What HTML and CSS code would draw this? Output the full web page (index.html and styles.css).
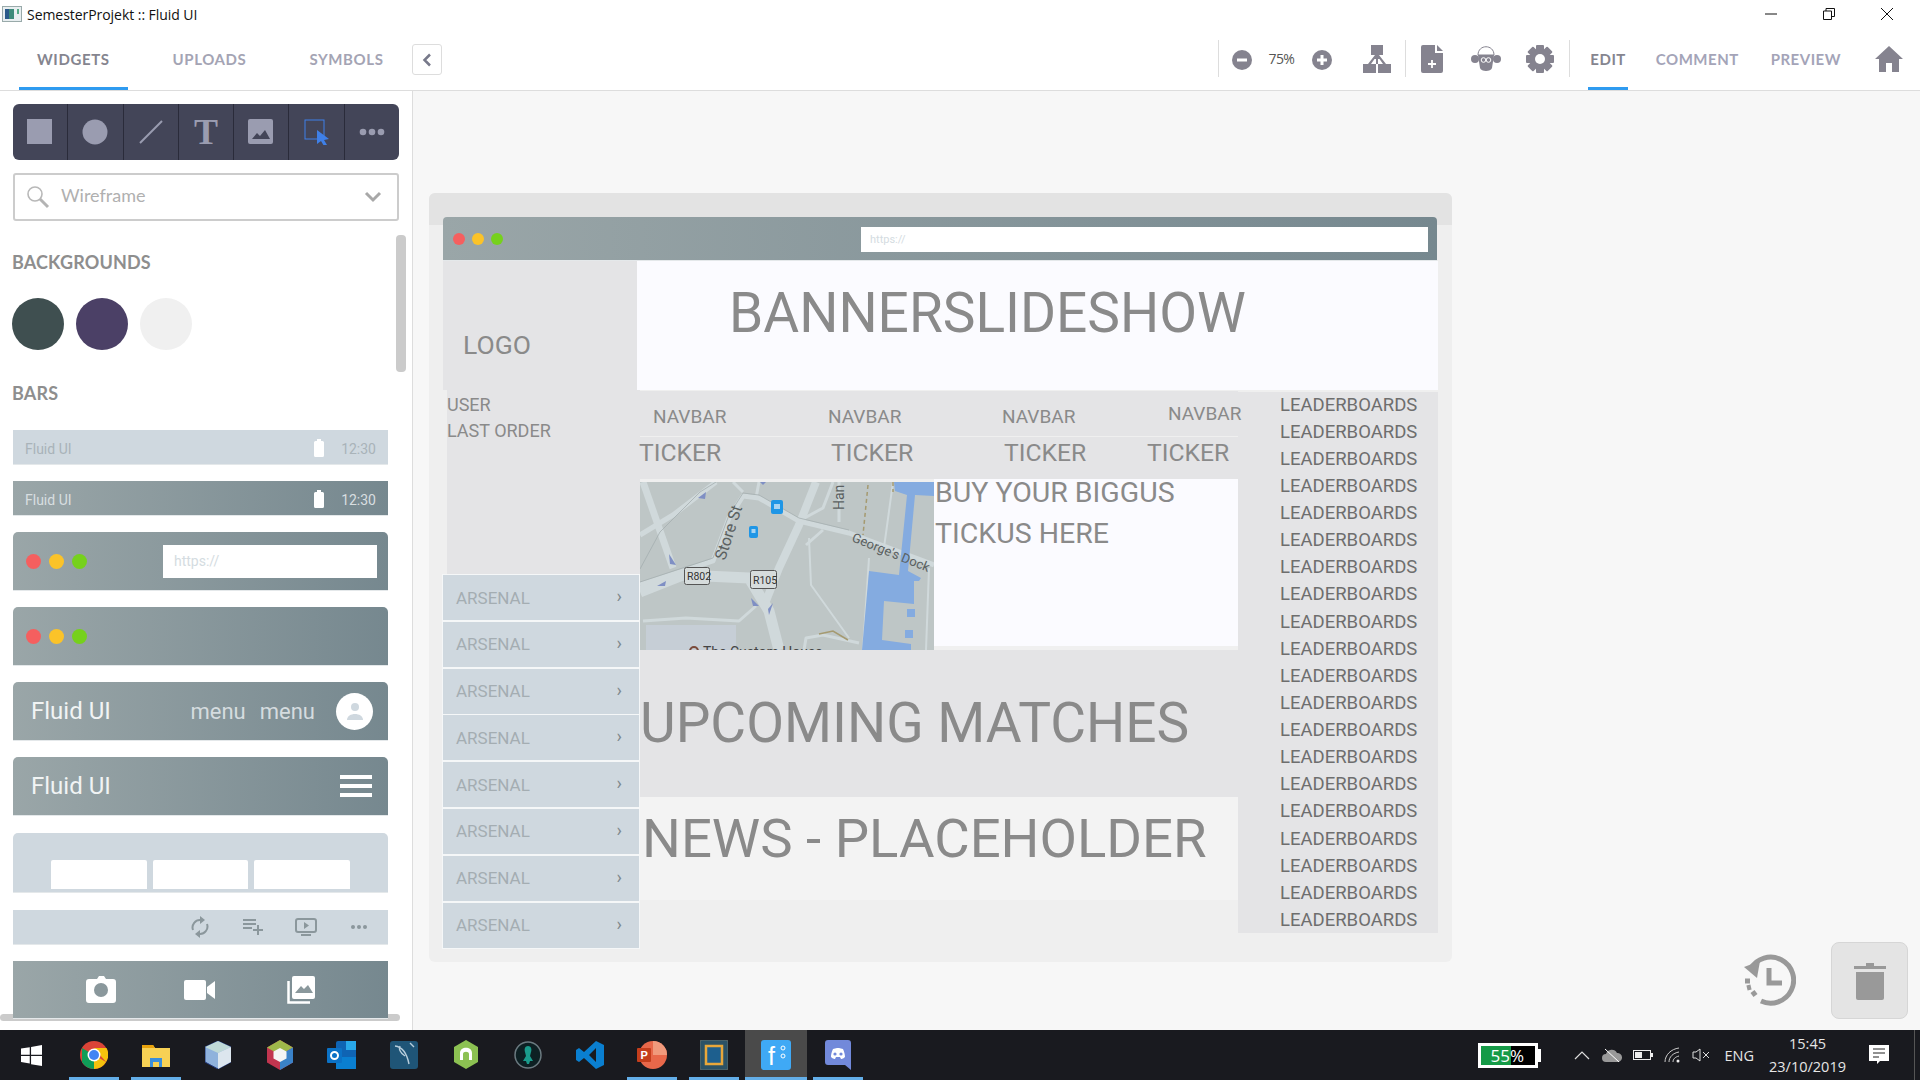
FILE: index.html
```html
<!DOCTYPE html>
<html lang="en">
<head>
    <meta charset="UTF-8">
    <title>SemesterProjekt :: Fluid UI</title>
    <link rel="stylesheet" href="styles.css">
</head>
<body>
    <!-- window title -->
    <div class="titlebar">
        <svg class="app-icon" width="20" height="16" viewBox="0 0 20 16"><rect x="0.5" y="0.5" width="19" height="15" fill="#e8eef0" stroke="#9aa"/><rect x="3" y="3" width="9" height="10" fill="#3d8a7a"/><rect x="3" y="3" width="4" height="10" fill="#2b5a8a"/><rect x="15" y="3" width="2" height="5" fill="#5a8"/></svg>
        <span class="title-text">SemesterProjekt :: Fluid UI</span>
        <div class="win-btns">
            <svg width="12" height="12" viewBox="0 0 12 12"><path d="M0 6h12" stroke="#111"/></svg>
            <svg width="12" height="12" viewBox="0 0 12 12"><path d="M.5 3h8v8.500h-8zM3 3V.5h8.500v8H8.500" fill="none" stroke="#111"/></svg>
            <svg width="12" height="12" viewBox="0 0 12 12"><path d="M0 0l12 12M12 0L0 12" stroke="#111"/></svg>
        </div>
    </div>

    <!-- top toolbar -->
    <div class="topbar">
        <div class="tabs">
            <div class="tab active">WIDGETS</div>
            <div class="tab">UPLOADS</div>
            <div class="tab">SYMBOLS</div>
        </div>
        <div class="collapse-btn">
            <svg width="10" height="14" viewBox="0 0 10 14"><path d="M8 1.500L2.500 7 8 12.500" fill="none" stroke="#77798a" stroke-width="2.500"/></svg>
        </div>
        <div class="top-right">
            <div class="divider"></div>
            <svg class="zoom-minus" width="22" height="22" viewBox="0 0 22 22"><circle cx="11" cy="11" r="10" fill="#85838f"/><path d="M6 11h10" stroke="#fff" stroke-width="3"/></svg>
            <span class="zoom-val">75%</span>
            <svg class="zoom-plus" width="22" height="22" viewBox="0 0 22 22"><circle cx="11" cy="11" r="10" fill="#85838f"/><path d="M6 11h10M11 6v10" stroke="#fff" stroke-width="3"/></svg>
            <svg class="flow-icon" width="28" height="28" viewBox="0 0 28 28"><path fill="#85838f" d="M8 0h12v10h-4l7 9h5v9H15v-9h5l-3.500-5H15v5h-2v-5h-1.500L8 19h5v9H0v-9h5l7-9H8z"/></svg>
            <div class="divider d2"></div>
            <svg class="doc-icon" width="22" height="28" viewBox="0 0 22 28"><path fill="#85838f" d="M2 0h12v8h8v18a2 2 0 0 1-2 2H2a2 2 0 0 1-2-2V2a2 2 0 0 1 2-2z"/><path fill="#85838f" d="M16 0l6 6h-6z"/><path d="M11 15v8M7 19h8" stroke="#fff" stroke-width="1.800"/></svg>
            <svg class="sheep-icon" width="30" height="26" viewBox="0 0 30 26"><circle cx="4" cy="13" r="4" fill="#85838f"/><circle cx="26" cy="13" r="4" fill="#85838f"/><path d="M7 9h16l-2 13c-1 4-11 4-12 0z" fill="#85838f"/><path d="M7 9c0-11 16-11 16 0z" fill="#fff" stroke="#85838f"/><circle cx="12.500" cy="14" r="2.300" fill="none" stroke="#fff"/><circle cx="17.500" cy="14" r="2.300" fill="none" stroke="#fff"/></svg>
            <svg class="gear-icon" width="28" height="28" viewBox="0 0 28 28"><g fill="#85838f"><rect x="10" y="0" width="8" height="28" rx="1"/><rect x="10" y="0" width="8" height="28" rx="1" transform="rotate(45 14 14)"/><rect x="10" y="0" width="8" height="28" rx="1" transform="rotate(90 14 14)"/><rect x="10" y="0" width="8" height="28" rx="1" transform="rotate(135 14 14)"/><circle cx="14" cy="14" r="9.500"/></g><circle cx="14" cy="14" r="5" fill="#fff"/></svg>
            <div class="divider d3"></div>
            <div class="mode active">EDIT</div>
            <div class="mode">COMMENT</div>
            <div class="mode">PREVIEW</div>
            <svg class="home-icon" width="28" height="26" viewBox="0 0 28 26"><path fill="#85838f" d="M14 0L28 13h-4v13h-7v-9h-6v9H4V13H0z"/></svg>
        </div>
    </div>

    <div class="main">
        <!-- widget panel -->
        <div class="sidebar">
            <div class="tools">
                <div class="tool"><svg width="26" height="26" viewBox="0 0 26 26"><rect width="25" height="25" fill="#9a9cb0"/></svg></div>
                <div class="tool"><svg width="26" height="26" viewBox="0 0 26 26"><circle cx="13" cy="13" r="12.500" fill="#9a9cb0"/></svg></div>
                <div class="tool"><svg width="26" height="26" viewBox="0 0 26 26"><path d="M2 24L24 2" stroke="#9a9cb0" stroke-width="2"/></svg></div>
                <div class="tool"><span class="t-glyph">T</span></div>
                <div class="tool"><svg width="26" height="26" viewBox="0 0 26 26"><rect width="25" height="25" rx="2" fill="#9a9cb0"/><path d="M4 20l5-6 3 3 5-6 5 9z" fill="#434558"/></svg></div>
                <div class="tool"><svg width="26" height="26" viewBox="0 0 26 26"><rect x="1" y="1" width="19" height="19" fill="none" stroke="#3f80e8"/><path d="M13 11l12 9-5 1 3 5-3 1-3-5-4 3z" fill="#3f80e8"/></svg></div>
                <div class="tool"><svg width="26" height="8" viewBox="0 0 26 8"><circle cx="4" cy="4" r="3.300" fill="#9a9cb0"/><circle cx="13" cy="4" r="3.300" fill="#9a9cb0"/><circle cx="22" cy="4" r="3.300" fill="#9a9cb0"/></svg></div>
            </div>

            <div class="search">
                <svg width="24" height="24" viewBox="0 0 24 24"><circle cx="9" cy="9" r="7" fill="none" stroke="#b8b8b8" stroke-width="1.600"/><path d="M14 14l8 8" stroke="#b4b4b4" stroke-width="3"/></svg>
                <span class="search-text">Wireframe</span>
                <svg class="search-arrow" width="18" height="12" viewBox="0 0 18 12"><path d="M2 2l7 7 7-7" fill="none" stroke="#a8a8a8" stroke-width="3"/></svg>
            </div>

            <div class="side-head">BACKGROUNDS</div>
            <div class="swatches">
                <div class="swatch dark"></div>
                <div class="swatch purple"></div>
                <div class="swatch pale"></div>
            </div>

            <div class="side-head bars-head">BARS</div>

            <div class="bar status light">
                <span class="status-name">Fluid UI</span>
                <svg width="10" height="18" viewBox="0 0 10 18"><path d="M3 0h4v2h1.500A1.500 1.500 0 0 1 10 3.500V16.500A1.500 1.500 0 0 1 8.500 18h-7A1.500 1.500 0 0 1 0 16.500V3.500A1.500 1.500 0 0 1 1.500 2H3z" fill="#fff"/></svg>
                <span class="status-time">12:30</span>
            </div>
            <div class="bar status grad">
                <span class="status-name">Fluid UI</span>
                <svg width="10" height="18" viewBox="0 0 10 18"><path d="M3 0h4v2h1.500A1.500 1.500 0 0 1 10 3.500V16.500A1.500 1.500 0 0 1 8.500 18h-7A1.500 1.500 0 0 1 0 16.500V3.500A1.500 1.500 0 0 1 1.500 2H3z" fill="#fff"/></svg>
                <span class="status-time">12:30</span>
            </div>
            <div class="bar tall grad round">
                <div class="dots"><i class="red"></i><i class="yellow"></i><i class="green"></i></div>
                <div class="url">https://</div>
            </div>
            <div class="bar tall grad round">
                <div class="dots"><i class="red"></i><i class="yellow"></i><i class="green"></i></div>
            </div>
            <div class="bar tall grad round">
                <span class="brand">Fluid UI</span>
                <span class="bar-menu first">menu</span>
                <span class="bar-menu">menu</span>
                <div class="avatar"><svg width="18" height="18" viewBox="0 0 18 18"><circle cx="9" cy="5" r="4" fill="#cfd8df"/><path d="M1 18c0-8 16-8 16 0z" fill="#cfd8df"/></svg></div>
            </div>
            <div class="bar tall grad round last-tall">
                <span class="brand">Fluid UI</span>
                <div class="burger"><i></i><i></i><i></i></div>
            </div>
            <div class="bar tabs-bar light">
                <div class="mini-tab"></div>
                <div class="mini-tab"></div>
                <div class="mini-tab"></div>
            </div>
            <div class="bar actions light">
                <svg class="act-sync" width="18" height="22" viewBox="0 0 18 22"><path d="M2 14a7.500 7.500 0 0 1 8-10M16 8a7.500 7.500 0 0 1-8 10" fill="none" stroke="#8b979c" stroke-width="2"/><path d="M9 0l5 4-5 4zM9 14l-5 4 5 4z" fill="#8b979c"/></svg>
                <svg class="act-queue" width="20" height="16" viewBox="0 0 20 16"><path d="M0 1h13M0 5h13M0 9h9M15 6v10M10 11h10" stroke="#8b979c" stroke-width="2"/></svg>
                <svg width="22" height="18" viewBox="0 0 22 18"><rect x="1" y="1" width="20" height="13" rx="2" fill="none" stroke="#8b979c" stroke-width="2"/><path d="M9 4l5 3.500-5 3.500zM6 16h10v2H6z" fill="#8b979c"/></svg>
                <svg width="16" height="4" viewBox="0 0 16 4"><circle cx="2" cy="2" r="2" fill="#8b979c"/><circle cx="8" cy="2" r="2" fill="#8b979c"/><circle cx="14" cy="2" r="2" fill="#8b979c"/></svg>
            </div>
            <div class="bar media grad">
                <svg width="30" height="27" viewBox="0 0 30 27"><path d="M8 3h3l2-3h5l2 3h7a3 3 0 0 1 3 3v18a3 3 0 0 1-3 3H3a3 3 0 0 1-3-3V6a3 3 0 0 1 3-3z" fill="#fff"/><circle cx="15" cy="14" r="7" fill="#8a989c"/></svg>
                <svg width="31" height="20" viewBox="0 0 31 20"><rect width="22" height="20" rx="2" fill="#fff"/><path d="M23 7l8-6v18l-8-6z" fill="#fff"/></svg>
                <svg width="28" height="28" viewBox="0 0 28 28"><rect x="5" y="0" width="23" height="23" rx="2" fill="#fff"/><path d="M8 17l6-7 3 3 4-4 5 8z" fill="#8a989c"/><path d="M1.500 5v21.500H23" fill="none" stroke="#fff" stroke-width="2.500"/></svg>
            </div>
            <div class="side-scroll-v"></div>
            <div class="side-scroll-h"></div>
        </div>

        <!-- editor canvas -->
        <div class="canvas">
            <div class="frame">
                <div class="frame-band"></div>
                <div class="wf wf-bar">
                    <div class="wf-dots"><i class="red"></i><i class="yellow"></i><i class="green"></i></div>
                    <div class="wf-url">https://</div>
                </div>
                <div class="wf wf-logo">LOGO</div>
                <div class="wf wf-banner">BANNERSLIDESHOW</div>
                <div class="wf wf-user">USER<br>LAST ORDER</div>
                <div class="wf wf-leader">
                    <div>LEADERBOARDS</div><div>LEADERBOARDS</div><div>LEADERBOARDS</div><div>LEADERBOARDS</div>
                    <div>LEADERBOARDS</div><div>LEADERBOARDS</div><div>LEADERBOARDS</div><div>LEADERBOARDS</div>
                    <div>LEADERBOARDS</div><div>LEADERBOARDS</div><div>LEADERBOARDS</div><div>LEADERBOARDS</div>
                    <div>LEADERBOARDS</div><div>LEADERBOARDS</div><div>LEADERBOARDS</div><div>LEADERBOARDS</div>
                    <div>LEADERBOARDS</div><div>LEADERBOARDS</div><div>LEADERBOARDS</div><div>LEADERBOARDS</div>
                </div>
                <div class="wf wf-nav">
                    <span>NAVBAR</span><span>NAVBAR</span><span>NAVBAR</span><span class="raised">NAVBAR</span>
                </div>
                <div class="wf wf-ticker">
                    <span>TICKER</span><span>TICKER</span><span>TICKER</span><span>TICKER</span>
                </div>
                <svg class="wf wf-map" width="294" height="168" viewBox="0 0 294 168" font-family="Roboto, sans-serif">
                    <rect width="294" height="168" fill="#bec6c6"/>
                    <rect x="6" y="143" width="90" height="25" fill="#c6ced6"/>
                    <g fill="none" stroke="#d0d9db" stroke-linejoin="round">
                        <path stroke-width="11" d="M0 110L43 93 109 96 129 129 139 168"/>
                        <path stroke-width="8" d="M176 0L159 43 139 86 126 119"/>
                        <path stroke-width="7" d="M3 0L33 86"/>
                        <path stroke-width="5" d="M0 53L33 33 76 0"/>
                        <path stroke-width="5" d="M0 103L73 79 89 36 103 14 119 16 159 39 209 51 294 83"/>
                        <path stroke-width="2" d="M169 56L171 103 209 156"/>
                        <path stroke-width="3" d="M3 139L46 136 99 139 116 124"/>
                        <path stroke-width="2" d="M229 76L223 168M253 0L243 73M289 86L286 168"/>
                        <path stroke-width="3" d="M199 0V40M193 0L183 26 159 39M119 0L116 16M93 0L103 10M166 63L183 48"/>
                        <path stroke-width="3" d="M164 168L166 156 183 153 219 161"/>
                    </g>
                    <path fill="none" stroke="#a4aeb0" stroke-width="0.800" d="M0 100L73 76 89 33 103 11 119 13 159 36 209 48M0 87L20 50 60 10 76 0"/>
                    <path fill="none" stroke="#a59a70" stroke-width="1.500" d="M179 152L193 149 208 158"/>
                    <path fill="none" stroke="#a59a70" stroke-width="1.500" stroke-dasharray="4 3" d="M228 3L223 53M253 0V10"/>
                    <path fill="#84abe0" d="M254 0H294V14L275 13 268 89 281 96 279 99 274 99 274 122 244 119 242 158 271 162 271 168H222L229 89 259 93 267 13 255 9z"/>
                    <rect x="267" y="127" width="8" height="8" fill="#84abe0"/>
                    <rect x="265" y="148" width="8" height="8" fill="#84abe0"/>
                    <rect x="131" y="18" width="12" height="14" rx="2" fill="#1f96e6"/>
                    <rect x="134" y="22" width="6" height="5" fill="#a8d4f2"/>
                    <rect x="109" y="44" width="9" height="12" rx="2" fill="#1f96e6"/>
                    <rect x="111.500" y="47" width="4" height="4" fill="#a8d4f2"/>
                    <circle cx="54" cy="169" r="4" fill="none" stroke="#7a4a3a" stroke-width="2"/>
                    <text x="63" y="175" font-size="14" fill="#444">The Custom House</text>
                    <g fill="#d6dcdc" stroke="#555" stroke-width="1">
                        <rect x="44.500" y="85.500" width="25" height="17" rx="2"/>
                        <rect x="110.500" y="88.500" width="26" height="18" rx="2"/>
                    </g>
                    <text x="47" y="98" font-size="10.500" fill="#333">R802</text>
                    <text x="113" y="102" font-size="10.500" fill="#333">R105</text>
                    <text font-size="16" fill="#5a6060" transform="translate(85 79) rotate(-72)">Store St</text>
                    <text font-size="13" fill="#5a6060" transform="translate(211 59) rotate(22)">George's Dock</text>
                    <text font-size="14" fill="#5a6060" transform="translate(204 28) rotate(-90)">Han</text>
                    <g fill="#7f8fc4">
                        <path d="M58 16l8-6-1 7z"/><path d="M29 72l7 11-6-1z"/><path d="M17 104l9-5-1 5z"/><path d="M111 116l8 8-6 0z"/><path d="M133 121l-4 12-1-6z"/><path d="M120 0l6 0-3 3z"/>
                    </g>
                </svg>
                <div class="wf wf-buy"><div class="buy-text">BUY YOUR BIGGUS<br>TICKUS HERE</div></div>
                <div class="wf wf-upcoming">UPCOMING MATCHES</div>
                <div class="wf wf-news">NEWS - PLACEHOLDER</div>
                <div class="wf wf-rows">
                    <div class="wf-row"><span>ARSENAL</span><b>›</b></div>
                    <div class="wf-row"><span>ARSENAL</span><b>›</b></div>
                    <div class="wf-row"><span>ARSENAL</span><b>›</b></div>
                    <div class="wf-row"><span>ARSENAL</span><b>›</b></div>
                    <div class="wf-row"><span>ARSENAL</span><b>›</b></div>
                    <div class="wf-row"><span>ARSENAL</span><b>›</b></div>
                    <div class="wf-row"><span>ARSENAL</span><b>›</b></div>
                    <div class="wf-row"><span>ARSENAL</span><b>›</b></div>
                </div>
            </div>

            <svg class="history" width="52" height="52" viewBox="0 0 52 52"><path d="M6.500 15A23 23 0 1 1 17 47" fill="none" stroke="#999" stroke-width="5"/><path d="M0 13l16-6-3 17z" fill="#999"/><path d="M1 27h5M3 34l4-1M8 41l4-3" stroke="#999" stroke-width="5"/><path d="M25 14v15h13" fill="none" stroke="#999" stroke-width="5"/></svg>
            <div class="trash">
                <svg width="32" height="38" viewBox="0 0 32 38"><path d="M0 4h12V1h8v3h12v3H0z" fill="#999"/><path d="M2 10h28v26a2 2 0 0 1-2 2H4a2 2 0 0 1-2-2z" fill="#999"/></svg>
            </div>
        </div>
    </div>

    <!-- windows taskbar -->
    <div class="taskbar">
        <div class="task start"><svg width="21" height="21" viewBox="0 0 24 24"><path fill="#fff" d="M0 4l10-1.500V11H0zM11.500 2.200L24 0v11H11.500zM0 12.500h10V21L0 19.500zM11.500 12.500H24V24l-12.500-2z"/></svg></div>
        <div class="task open"><svg width="28" height="28" viewBox="0 0 28 28"><circle cx="14" cy="14" r="14" fill="#db4437"/><path d="M14 14L26 21A14 14 0 0 1 14 28z" fill="#f4c20d"/><path d="M14 14L14 28A14 14 0 0 1 2 21L2 7z" fill="#0f9d58"/><path d="M14 7h12.500A14 14 0 0 1 26 21z" fill="#f4c20d"/><circle cx="14" cy="14" r="6.500" fill="#fff"/><circle cx="14" cy="14" r="5" fill="#4285f4"/></svg></div>
        <div class="task open"><svg width="28" height="24" viewBox="0 0 28 24"><path d="M0 2h11l2 3h15v19H0z" fill="#f7d154"/><path d="M0 2h11l2 3H0z" fill="#e8a20c"/><path d="M8 15h12v9h-3v-5h-6v5H8z" fill="#3a8edb"/></svg></div>
        <div class="task"><svg width="26" height="28" viewBox="0 0 26 28"><path d="M13 0l13 6v15l-13 7L0 21V6z" fill="#8fb2dc" stroke="#223a80"/><path d="M13 0l13 6-13 6L0 6z" fill="#bfd9d6"/><path d="M13 12l13-6v15l-13 7z" fill="#dce6ee"/></svg></div>
        <div class="task"><svg width="26" height="30" viewBox="0 0 26 30"><path d="M13 0l13 7.500v15L13 30 0 22.500v-15z" fill="#c2354f"/><path d="M13 0l13 7.500-13 7.500L0 7.500z" fill="#9fb84a"/><path d="M26 7.500v15L13 30V15z" fill="#3a82c8"/><path d="M13 8l6.500 3.500v7L13 22l-6.500-3.500v-7z" fill="#f4f4f4"/></svg></div>
        <div class="task"><svg width="30" height="28" viewBox="0 0 30 28"><rect x="9" y="0" width="20" height="28" rx="2" fill="#0f64b4"/><rect x="19" y="0" width="10" height="9" fill="#29a8ea"/><path d="M9 16h20v12H9z" fill="#0a7fd1"/><rect x="0" y="7" width="15" height="15" rx="1" fill="#0b72c6"/><circle cx="7.500" cy="14.500" r="3.500" fill="none" stroke="#fff" stroke-width="2"/></svg></div>
        <div class="task"><svg width="28" height="28" viewBox="0 0 28 28"><rect width="28" height="28" rx="3" fill="#1f5577"/><path d="M5 5c8 1 12 8 14 18M10 5c-2 5 2 8 5 10M20 2l4 4" fill="none" stroke="#b8cedc" stroke-width="1.400"/></svg></div>
        <div class="task"><svg width="24" height="30" viewBox="0 0 24 30"><path d="M12 0l12 7v15l-12 7L0 22V7z" fill="#8cc152"/><path d="M6 20v-7c0-7 12-7 12 0v7h-3v-6c0-3-6-3-6 0v6z" fill="#fff"/></svg></div>
        <div class="task"><svg width="28" height="28" viewBox="0 0 28 28"><circle cx="14" cy="14" r="13" fill="#0d2023" stroke="#6b7a80" stroke-width="1.500"/><path d="M14 5c3 0 4 3 3 6l-1 4 3 5h-3l-1 3h-2l-1-3H9l3-5-1-4c-1-3 0-6 3-6z" fill="#1a9c8c"/></svg></div>
        <div class="task"><svg width="28" height="28" viewBox="0 0 28 28"><path d="M20 0l8 4v20l-8 4L8 17l-5 4-3-2V9l3-2 5 4zM20 7l-7 7 7 7z" fill="#0a7fd0"/></svg></div>
        <div class="task open"><svg width="30" height="28" viewBox="0 0 30 28"><circle cx="16" cy="14" r="14" fill="#e8684a"/><path d="M16 14V0a14 14 0 0 1 14 14z" fill="#f09a7c"/><rect x="0" y="7" width="14" height="14" rx="1" fill="#c43e1c"/><text x="3.500" y="18" font-size="11" font-family="'Liberation Sans', sans-serif" font-weight="700" fill="#fff">P</text></svg></div>
        <div class="task open"><svg width="28" height="30" viewBox="0 0 28 30"><rect width="28" height="30" rx="2" fill="#2b5266" stroke="#65706e"/><rect x="6" y="6" width="16" height="18" fill="#1d5f8e" stroke="#e8a73a" stroke-width="2.500"/></svg></div>
        <div class="task open current"><svg width="30" height="30" viewBox="0 0 30 30"><rect width="30" height="30" rx="3" fill="#3fa9f5"/><text x="7" y="25" font-size="25" font-family="'Liberation Sans', sans-serif" fill="#fff">f</text><circle cx="22" cy="8" r="2" fill="none" stroke="#fff"/><circle cx="22" cy="16" r="2" fill="none" stroke="#fff"/></svg></div>
        <div class="task open"><svg width="26" height="30" viewBox="0 0 26 30"><path d="M3 0h20a3 3 0 0 1 3 3v27l-6-5H3a3 3 0 0 1-3-3V3a3 3 0 0 1 3-3z" fill="#7289da"/><path d="M6 17c0-4 2-8 2-8l4-1h2l4 1s2 4 2 8c-2 2-4 2-4 2l-1-2h-4l-1 2s-2 0-4-2z" fill="#fff"/><circle cx="10" cy="14" r="1.600" fill="#7289da"/><circle cx="16" cy="14" r="1.600" fill="#7289da"/></svg></div>

        <div class="tray">
            <div class="meter"><div class="meter-fill"></div><span class="meter-text">55%</span></div>
            <div class="meter-tip"></div>
            <svg class="tray-chev" width="16" height="10" viewBox="0 0 16 10"><path d="M1 9l7-7 7 7" fill="none" stroke="#ddd" stroke-width="1.200"/></svg>
            <svg class="tray-cloud" width="20" height="14" viewBox="0 0 20 14"><path d="M4 14a4 4 0 0 1 0-8 6 6 0 0 1 11-1 4.500 4.500 0 0 1 1 9z" fill="#999"/><path d="M3 1l14 13" stroke="#fff"/></svg>
            <svg class="tray-batt" width="20" height="10" viewBox="0 0 20 10"><rect x=".5" y=".5" width="17" height="9" fill="none" stroke="#eee"/><rect x="2" y="2" width="7" height="6" fill="#eee"/><rect x="18" y="3" width="2" height="4" fill="#eee"/></svg>
            <svg class="tray-wifi" width="16" height="16" viewBox="0 0 16 16"><path d="M1 15C1 8 7 2 15 1M5 15c0-5 4-9 10-10M9 15c0-3 2-5 6-6" fill="none" stroke="#ccc"/><circle cx="14" cy="14" r="1.500" fill="#eee"/></svg>
            <svg class="tray-sound" width="18" height="14" viewBox="0 0 18 14"><path d="M1 4h3l4-3v12L4 10H1z" fill="none" stroke="#ddd"/><path d="M11 4l6 6M17 4l-6 6" stroke="#ddd"/></svg>
            <span class="tray-lang">ENG</span>
            <div class="tray-clock"><div>15:45</div><div>23/10/2019</div></div>
            <svg class="tray-note" width="20" height="20" viewBox="0 0 20 20"><path d="M0 0h20v16h-9l-3 3v-3H0z" fill="#fff"/><path d="M4 4h12M4 8h12M4 12h6" stroke="#222"/></svg>
            <div class="show-desktop"></div>
        </div>
    </div>
</body>
</html>
```
FILE: styles.css
```css
html, body {
    margin: 0;
    height: 100%;
}
body {
    width: 1920px;
    height: 1080px;
    overflow: hidden;
    display: flex;
    flex-direction: column;
    font-family: Lato, sans-serif;
    background: #fff;
}

/* window title */
.titlebar {
    height: 30px;
    display: flex;
    align-items: center;
    padding: 0 0 2px 2px;
    box-sizing: border-box;
}
.app-icon {
    margin-right: 5px;
}
.title-text {
    font-family: "Open Sans", sans-serif;
    font-size: 14px;
    color: #111;
    letter-spacing: -0.05px;
}
.win-btns {
    margin-left: auto;
    display: flex;
    gap: 46px;
    padding-right: 27px;
}

/* top toolbar */
.topbar {
    height: 61px;
    box-sizing: border-box;
    border-bottom: 1px solid #ddd;
    display: flex;
}
.tabs {
    display: flex;
    padding-left: 19px;
}
.tab {
    height: 60px;
    line-height: 58px;
    box-sizing: border-box;
    font-size: 15px;
    font-weight: 700;
    color: #a4a4b4;
    letter-spacing: 0.6px;
    padding: 0 18px;
    margin-right: 27px;
}
.tab.active {
    color: #85858f;
    border-bottom: 3px solid #2f9bf0;
}
.collapse-btn {
    width: 30px;
    height: 31px;
    box-sizing: border-box;
    border: 1px solid #ddd;
    border-radius: 3px;
    margin: 14px 0 0 -17px;
    display: flex;
    align-items: center;
    justify-content: center;
}
.top-right {
    margin-left: auto;
    display: flex;
    align-items: center;
    padding-bottom: 3px;
}
.divider {
    width: 1px;
    height: 37px;
    background: #ddd;
}
.zoom-minus {
    margin: 2px 0 0 12px;
}
.zoom-val {
    font-family: "Open Sans", sans-serif;
    font-size: 14px;
    color: #555;
    margin: 0 17px 0 16px;
    letter-spacing: -0.6px;
}
.zoom-plus {
    margin-top: 2px;
}
.flow-icon { margin-left: 30px; }
.d2 { margin-left: 14px; }
.doc-icon { margin-left: 15px; }
.sheep-icon { margin-left: 28px; }
.gear-icon { margin-left: 25px; }
.d3 { margin-left: 15px; }
.mode {
    height: 60px;
    line-height: 58px;
    box-sizing: border-box;
    margin-left: 18px;
    margin-top: 3px;
    padding: 0 2px;
    font-size: 15px;
    color: #a4a4b8;
    font-weight: 700;
    letter-spacing: 0.5px;
}
.mode + .mode {
    margin-left: 28px;
}
.mode.active + .mode {
    margin-left: 26px;
}
.mode.active {
    color: #85858f;
    border-bottom: 3px solid #2f9bf0;
}
.home-icon {
    margin: 0 17px 0 32px;
}

/* main area */
.main {
    flex: 1;
    display: flex;
    min-height: 0;
}
.sidebar {
    width: 413px;
    flex: none;
    box-sizing: border-box;
    border-right: 1px solid #ddd;
    padding: 13px 0 0 13px;
    position: relative;
    overflow: hidden;
}
.tools {
    width: 386px;
    height: 56px;
    background: #434558;
    border-radius: 6px;
    display: flex;
}
.tool {
    flex: 1;
    display: flex;
    align-items: center;
    justify-content: center;
    border-left: 1px solid #2a2b3a;
}
.tool:first-child {
    border-left: none;
}
.t-glyph {
    font-family: "Liberation Serif", serif;
    font-size: 36px;
    font-weight: 700;
    color: #9a9cb0;
    line-height: 1;
}
.search {
    width: 386px;
    height: 48px;
    box-sizing: border-box;
    margin-top: 13px;
    border: 2px solid #ccc;
    border-radius: 3px;
    display: flex;
    align-items: center;
    padding: 0 15px 0 11px;
}
.search-text {
    font-size: 18px;
    color: #b0b0b0;
    margin: 0 0 4px 11px;
}
.search-arrow {
    margin-left: auto;
}
.side-head {
    margin: 31px 0 0 -1px;
    height: 20px;
    line-height: 20px;
    font-size: 18px;
    font-weight: 700;
    color: #8e8e8e;
    letter-spacing: 0.15px;
}
.swatches {
    display: flex;
    gap: 12px;
    margin: 26px 0 0 -1px;
}
.swatch {
    width: 52px;
    height: 52px;
    border-radius: 50%;
}
.swatch.dark { background: #3f4f50; }
.swatch.purple { background: #4b4066; }
.swatch.pale { background: #f0f0f0; }
.bars-head {
    margin-top: 33px;
    margin-bottom: 27px;
}
.bar {
    width: 375px;
    margin-bottom: 16px;
    display: flex;
    align-items: center;
    box-sizing: border-box;
    border-bottom: 1px solid #e4e8ea;
}
.bar.light { background: #cfd8df; }
.bar.grad { background: linear-gradient(90deg, #9aa6a8, #76888f); }
.bar.round { border-radius: 5px 5px 0 0; }
.status {
    height: 35px;
    padding: 3px 12px 0;
    font-family: Roboto, sans-serif;
    font-size: 14px;
}
.status-name { margin-right: auto; }
.status svg { margin-top: -2px; }
.status-time { margin-left: 17px; }
.status.light { color: #a9b3b9; }
.status.grad { color: #d8dee0; }
.tall { height: 59px; }
.last-tall { margin-bottom: 17px; }
.dots {
    display: flex;
    gap: 8px;
    margin-left: 13px;
}
.dots i, .wf-dots i {
    display: block;
    border-radius: 50%;
}
.dots i {
    width: 15px;
    height: 15px;
}
.red { background: #f55f5f; }
.yellow { background: #fbc329; }
.green { background: #76d11c; }
.url {
    width: 214px;
    height: 33px;
    line-height: 33px;
    background: #fff;
    margin-left: auto;
    margin-right: 11px;
    padding-left: 11px;
    box-sizing: border-box;
    font-family: Roboto, sans-serif;
    font-size: 14px;
    color: #d4dce1;
}
.brand {
    font-family: Roboto, sans-serif;
    font-size: 24px;
    color: #f1f4f4;
    margin-left: 18px;
    margin-right: auto;
}
.bar-menu {
    font-family: Roboto, sans-serif;
    font-size: 22px;
    color: #d5dcdf;
    margin-right: 16px;
}
.bar-menu.first {
    margin-right: 14px;
}
.avatar {
    width: 37px;
    height: 37px;
    border-radius: 50%;
    background: #fff;
    margin: 0 15px 0 5px;
    display: flex;
    align-items: center;
    justify-content: center;
}
.burger {
    width: 32px;
    margin-right: 16px;
}
.burger i {
    display: block;
    height: 4px;
    background: #fff;
    margin: 5px 0;
}
.tabs-bar {
    height: 60px;
    margin-bottom: 17px;
    border-radius: 5px 5px 0 0;
    align-items: flex-end;
    padding: 0 38px 3px;
    gap: 6px;
}
.mini-tab {
    flex: 1;
    height: 29px;
    background: #fff;
    border-radius: 2px 2px 0 0;
}
.actions {
    height: 35px;
    justify-content: flex-end;
    padding-right: 21px;
    gap: 34px;
}
.act-queue { margin-right: -2px; }
.media {
    height: 58px;
    margin-bottom: 0;
    padding-left: 73px;
}
.media svg:nth-child(2) { margin-left: 68px; }
.media svg:nth-child(3) { margin-left: 72px; }
.side-scroll-v {
    position: absolute;
    left: 396px;
    top: 144px;
    width: 10px;
    height: 137px;
    border-radius: 4px;
    background: #cbcbcb;
}
.side-scroll-h {
    position: absolute;
    left: 0;
    bottom: 9px;
    width: 400px;
    height: 7px;
    border-radius: 4px;
    background: #cbcbcb;
    z-index: -1;
}

/* editor canvas */
.canvas {
    flex: 1;
    position: relative;
    background: #f7f7f7;
}
.frame {
    position: absolute;
    left: 16px;
    top: 102px;
    width: 1023px;
    height: 769px;
    background: #efefef;
    border-radius: 6px;
    font-family: Roboto, sans-serif;
    color: #8a8a8a;
}
.frame-band {
    height: 32px;
    background: #e3e3e3;
    border-radius: 6px 6px 0 0;
}
.wf {
    position: absolute;
    box-sizing: border-box;
}
.wf-bar {
    left: 14px;
    top: 24px;
    width: 994px;
    height: 44px;
    border-radius: 4px 4px 0 0;
    border-bottom: 1px solid #e4e8ea;
    background: linear-gradient(90deg, #9aa6a8, #76888f);
}
.wf-dots {
    position: absolute;
    left: 10px;
    top: 16px;
    display: flex;
    gap: 7px;
}
.wf-dots i {
    width: 12px;
    height: 12px;
}
.wf-url {
    position: absolute;
    left: 418px;
    top: 10px;
    width: 567px;
    height: 25px;
    line-height: 25px;
    padding-left: 9px;
    box-sizing: border-box;
    background: #fff;
    font-size: 11px;
    color: #d4dce1;
}
.wf-logo {
    left: 14px;
    top: 68px;
    width: 194px;
    height: 129px;
    background: #e4e4e6;
    font-size: 26.500px;
    padding: 68px 0 0 20px;
    line-height: 32px;
}
.wf-banner {
    left: 208px;
    top: 68px;
    width: 801px;
    height: 129px;
    background: #fbfbff;
    font-size: 55px;
    padding: 20px 0 0 92px;
    line-height: 64px;
}
.wf-user {
    left: 18px;
    top: 197px;
    width: 193px;
    height: 184px;
    background: #e4e4e6;
    font-size: 18px;
    line-height: 26px;
    padding-top: 2px;
}
.wf-nav {
    left: 211px;
    top: 198px;
    width: 598px;
    height: 45px;
    background: #e4e4e6;
    display: grid;
    grid-template-columns: 175px 174px 166px 70px;
    padding-left: 13px;
    font-size: 19px;
    line-height: 51px;
    white-space: nowrap;
}
.raised {
    margin-top: -3px;
}
.wf-ticker {
    left: 210px;
    top: 244px;
    width: 599px;
    height: 42px;
    background: #e4e4e6;
    display: grid;
    grid-template-columns: 192px 173px 143px auto;
    font-size: 24.700px;
    line-height: 32px;
}
.wf-leader {
    left: 809px;
    top: 199px;
    width: 200px;
    height: 541px;
    background: #e4e4e6;
    padding: 0 0 0 42px;
    font-size: 18.500px;
    line-height: 27.130px;
    margin-top: -0.500px;
    color: #6e6e6e;
}
.wf-map {
    left: 211px;
    top: 289px;
}
.wf-buy {
    left: 505px;
    top: 286px;
    width: 304px;
    height: 171px;
    background: #fbfbff;
    border-bottom: 4px solid #f0f0f0;
    font-size: 28.500px;
    line-height: 41px;
    padding-left: 1px;
}
.buy-text {
    margin-top: -7px;
}
.wf-upcoming {
    left: 211px;
    top: 457px;
    width: 598px;
    height: 147px;
    background: #e4e4e6;
    font-size: 55px;
    line-height: 64px;
    padding-top: 41px;
}
.wf-news {
    left: 211px;
    top: 604px;
    width: 598px;
    height: 103px;
    background: #f3f3f3;
    font-size: 54.500px;
    line-height: 64px;
    padding: 9px 0 0 2px;
}
.wf-rows {
    left: 14px;
    top: 382px;
    width: 196px;
    display: flex;
    flex-direction: column;
    gap: 1.800px;
}
.wf-row {
    height: 45px;
    background: #cfd8df;
    outline: 1px solid #f5f7f8;
    display: flex;
    align-items: center;
    justify-content: space-between;
    padding: 0 17px 0 13px;
    font-size: 17px;
    color: #a4adb2;
}
.wf-row b {
    font-weight: 400;
    font-size: 18px;
    color: #7e888d;
    margin-top: -4px;
}
.history {
    position: absolute;
    left: 1331px;
    top: 863px;
}
.trash {
    position: absolute;
    left: 1418px;
    top: 851px;
    width: 77px;
    height: 77px;
    box-sizing: border-box;
    background: #e4e4e4;
    border: 1px solid #d6d6d6;
    border-radius: 8px;
    display: flex;
    align-items: center;
    justify-content: center;
}

/* windows taskbar */
.taskbar {
    height: 50px;
    flex: none;
    background: #191a1f;
    display: flex;
    padding-left: 1px;
    color: #e6e6e6;
}
.task {
    width: 62px;
    height: 50px;
    box-sizing: border-box;
    display: flex;
    align-items: center;
    justify-content: center;
    position: relative;
}
.task.start {
    padding-right: 2px;
}
.task.open::after {
    content: "";
    position: absolute;
    left: 6px;
    right: 6px;
    bottom: 0;
    height: 3px;
    background: #63aee8;
}
.task.current {
    background: #4a4a4a;
}
.task.current::after {
    left: 0;
    right: 0;
}
.tray {
    margin-left: auto;
    display: flex;
    align-items: center;
    font-family: "Open Sans", sans-serif;
}
.meter {
    width: 60px;
    height: 25px;
    box-sizing: border-box;
    border: 3px solid #fff;
    background: #000;
    position: relative;
}
.meter-fill {
    height: 100%;
    width: 57%;
    background: #159a47;
}
.meter-text {
    position: absolute;
    left: 10px;
    top: -3px;
    font-size: 17px;
    line-height: 25px;
    color: #fff;
}
.meter-tip {
    width: 3px;
    height: 13px;
    background: #fff;
}
.tray-chev { margin-left: 33px; }
.tray-cloud { margin-left: 12px; }
.tray-batt { margin-left: 11px; }
.tray-wifi { margin-left: 11px; }
.tray-sound { margin-left: 12px; }
.tray-lang {
    font-size: 14.500px;
    margin-left: 15px;
}
.tray-clock {
    font-size: 14.500px;
    line-height: 23px;
    text-align: center;
    margin-left: 15px;
}
.tray-note { margin-left: 23px; }
.show-desktop {
    width: 1px;
    height: 50px;
    background: #555;
    margin: 0 5px 0 25px;
}
```
